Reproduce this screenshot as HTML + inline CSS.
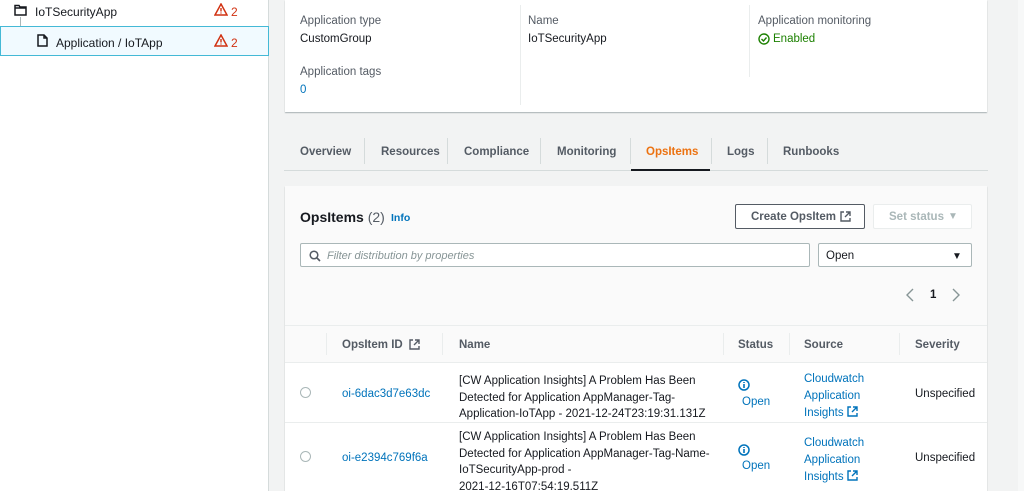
<!DOCTYPE html>
<html><head><meta charset="utf-8"><style>
*{box-sizing:border-box;margin:0;padding:0}
html{overflow:hidden}
body{width:1024px;height:491px;overflow:hidden;background:#f2f3f3;font-family:"Liberation Sans",sans-serif;font-size:11.5px;color:#16191f;position:relative}
.a{position:absolute;white-space:nowrap}
div.a{padding-top:1px}
.lbl{color:#545b64}
.link{color:#0073bb}
.b{font-weight:bold}
svg{display:inline-block;vertical-align:middle}
</style></head><body>
<!-- sidebar -->
<div class="a" style="left:0;top:0;width:269px;height:491px;background:#fff;border-right:1px solid #d5dbdb"></div>
<div class="a" style="left:20px;top:17px;width:1px;height:24px;background:#aab7b8;padding:0"></div>
<div class="a" style="left:20px;top:41px;width:16px;height:1px;background:#aab7b8;padding:0"></div>
<svg class="a" style="left:14px;top:4px" width="13" height="12" viewBox="0 0 13 12"><path d="M1 1.5h4l1 1.5h6v8H1z M1 4h11" fill="none" stroke="#16191f" stroke-width="1.5"/></svg>
<div class="a" style="left:35px;top:4px;font-size:12px">IoTSecurityApp</div>
<svg class="a" style="left:214px;top:3px" width="14" height="13" viewBox="0 0 14 13"><path d="M7 1L13 12H1z" fill="none" stroke="#d13212" stroke-width="1.5"/><path d="M7 5v3.5M7 9.5v1" stroke="#d13212" stroke-width="1.4"/></svg>
<div class="a" style="left:231px;top:4px;color:#d13212;font-size:12px">2</div>
<div class="a" style="left:0;top:26px;width:269px;height:30px;background:#f1faff;border:1px solid #44b9d6"></div>
<svg class="a" style="left:37px;top:34px" width="11" height="13" viewBox="0 0 11 13"><path d="M1 1h6l3 3v8H1z M7 1v3h3" fill="none" stroke="#16191f" stroke-width="1.5"/></svg>
<div class="a" style="left:56px;top:35px;font-size:12px">Application / IoTApp</div>
<svg class="a" style="left:214px;top:34px" width="14" height="13" viewBox="0 0 14 13"><path d="M7 1L13 12H1z" fill="none" stroke="#d13212" stroke-width="1.5"/><path d="M7 5v3.5M7 9.5v1" stroke="#d13212" stroke-width="1.4"/></svg>
<div class="a" style="left:231px;top:35px;color:#d13212;font-size:12px">2</div>

<!-- right strip -->
<div class="a" style="left:1018px;top:0;width:6px;height:491px;background:#f7f8f8"></div>

<!-- top card -->
<div class="a" style="left:285px;top:0;width:702px;height:112px;background:#fff;box-shadow:0 1px 1px rgba(0,28,36,.3)"></div>
<div class="a" style="left:520px;top:5px;width:1px;height:100px;background:#eaeded;padding:0"></div>
<div class="a" style="left:749px;top:5px;width:1px;height:72px;background:#eaeded;padding:0"></div>
<div class="a lbl" style="left:300px;top:14px">Application type</div>
<div class="a" style="left:300px;top:32px">CustomGroup</div>
<div class="a lbl" style="left:300px;top:65px">Application tags</div>
<div class="a link" style="left:300px;top:83px">0</div>
<div class="a lbl" style="left:528px;top:14px">Name</div>
<div class="a" style="left:528px;top:32px">IoTSecurityApp</div>
<div class="a lbl" style="left:758px;top:14px">Application monitoring</div>
<svg class="a" style="left:758px;top:33px" width="12" height="12" viewBox="0 0 12 12"><circle cx="6" cy="6" r="5" fill="none" stroke="#1d8102" stroke-width="1.4"/><path d="M3.5 6l2 2 3-3.5" fill="none" stroke="#1d8102" stroke-width="1.4"/></svg>
<div class="a" style="left:773px;top:32px;color:#1d8102">Enabled</div>

<!-- tabs -->
<div class="a" style="left:284px;top:170px;width:704px;height:1px;background:#d5dbdb;padding:0"></div>
<div class="a" style="left:364px;top:138px;width:1px;height:26px;background:#d5dbdb;padding:0"></div>
<div class="a" style="left:447px;top:138px;width:1px;height:26px;background:#d5dbdb;padding:0"></div>
<div class="a" style="left:540px;top:138px;width:1px;height:26px;background:#d5dbdb;padding:0"></div>
<div class="a" style="left:630px;top:138px;width:1px;height:26px;background:#d5dbdb;padding:0"></div>
<div class="a" style="left:711px;top:138px;width:1px;height:26px;background:#d5dbdb;padding:0"></div>
<div class="a" style="left:767px;top:138px;width:1px;height:26px;background:#d5dbdb;padding:0"></div>
<div class="a" style="left:631px;top:169px;width:79px;height:2px;background:#16191f;padding:0"></div>
<div class="a b" style="left:300px;top:145px;color:#545b64">Overview</div>
<div class="a b" style="left:381px;top:145px;color:#545b64">Resources</div>
<div class="a b" style="left:464px;top:145px;color:#545b64">Compliance</div>
<div class="a b" style="left:557px;top:145px;color:#545b64">Monitoring</div>
<div class="a b" style="left:646px;top:145px;color:#ec7211">OpsItems</div>
<div class="a b" style="left:727px;top:145px;color:#545b64">Logs</div>
<div class="a b" style="left:783px;top:145px;color:#545b64">Runbooks</div>

<!-- opsitems card -->
<div class="a" style="left:285px;top:186px;width:702px;height:305px;background:#fafafa;box-shadow:0 1px 1px rgba(0,28,36,.3)"></div>
<div class="a" style="left:285px;top:325px;width:702px;height:1px;background:#eaeded;padding:0"></div>
<div class="a" style="left:300px;top:208px;font-size:14px;font-weight:bold">OpsItems <span style="font-weight:normal;color:#545b64">(2)</span></div>
<div class="a link b" style="left:391px;top:211px;font-size:10.5px">Info</div>
<div class="a" style="left:735px;top:204px;width:130px;height:25px;border:1px solid #545b64;border-radius:2px;background:#fff"></div>
<div class="a b" style="left:751px;top:210px;color:#545b64">Create OpsItem</div>
<svg class="a" style="left:840px;top:211px" width="11" height="11" viewBox="0 0 11 11"><path d="M4 1H1v9h9V7 M6 1h4v4 M10 1L5 6" fill="none" stroke="#545b64" stroke-width="1.4"/></svg>
<div class="a" style="left:873px;top:204px;width:99px;height:25px;border:1px solid #eaeded;border-radius:2px;background:#fff"></div>
<div class="a b" style="left:889px;top:210px;color:#aab7b8">Set status</div>
<div class="a" style="left:948px;top:210px;color:#aab7b8;font-size:10px">&#9660;</div>
<div class="a" style="left:300px;top:243px;width:510px;height:24px;border:1px solid #aab7b8;border-radius:2px;background:#fff"></div>
<svg class="a" style="left:309px;top:250px" width="12" height="12" viewBox="0 0 12 12"><circle cx="5" cy="5" r="3.8" fill="none" stroke="#545b64" stroke-width="1.5"/><path d="M8 8l3 3" stroke="#545b64" stroke-width="1.6"/></svg>
<div class="a" style="left:327px;top:249px;color:#879596;font-style:italic;font-size:11px">Filter distribution by properties</div>
<div class="a" style="left:818px;top:243px;width:154px;height:24px;border:1px solid #aab7b8;border-radius:2px;background:#fff"></div>
<div class="a" style="left:826px;top:249px">Open</div>
<div class="a" style="left:952px;top:250px;color:#16191f;font-size:10px">&#9660;</div>
<svg class="a" style="left:905px;top:288px" width="10" height="14" viewBox="0 0 10 14"><path d="M8 1L2 7l6 6" fill="none" stroke="#879596" stroke-width="1.4"/></svg>
<div class="a b" style="left:930px;top:288px">1</div>
<svg class="a" style="left:951px;top:288px" width="10" height="14" viewBox="0 0 10 14"><path d="M2 1l6 6-6 6" fill="none" stroke="#879596" stroke-width="1.4"/></svg>

<!-- table header -->
<div class="a" style="left:326px;top:333px;width:1px;height:22px;background:#eaeded;padding:0"></div>
<div class="a" style="left:442px;top:333px;width:1px;height:22px;background:#eaeded;padding:0"></div>
<div class="a" style="left:723px;top:333px;width:1px;height:22px;background:#eaeded;padding:0"></div>
<div class="a" style="left:789px;top:333px;width:1px;height:22px;background:#eaeded;padding:0"></div>
<div class="a" style="left:899px;top:333px;width:1px;height:22px;background:#eaeded;padding:0"></div>
<div class="a b" style="left:342px;top:338px;color:#545b64">OpsItem ID</div>
<svg class="a" style="left:409px;top:339px" width="11" height="11" viewBox="0 0 11 11"><path d="M4 1H1v9h9V7 M6 1h4v4 M10 1L5 6" fill="none" stroke="#545b64" stroke-width="1.4"/></svg>
<div class="a b" style="left:459px;top:338px;color:#545b64">Name</div>
<div class="a b" style="left:738px;top:338px;color:#545b64">Status</div>
<div class="a b" style="left:804px;top:338px;color:#545b64">Source</div>
<div class="a b" style="left:915px;top:338px;color:#545b64">Severity</div>

<!-- rows -->
<div class="a" style="left:285px;top:362px;width:702px;height:129px;background:#fff"></div>
<div class="a" style="left:285px;top:362px;width:702px;height:1px;background:#eaeded;padding:0"></div>
<div class="a" style="left:285px;top:422px;width:702px;height:1px;background:#eaeded;padding:0"></div>

<div class="a" style="left:300px;top:387px;width:11px;height:11px;border:1px solid #aab7b8;border-radius:50%;background:#fff;padding:0"></div>
<div class="a link" style="left:342px;top:387px">oi-6dac3d7e63dc</div>
<div class="a" style="left:459px;top:372px;line-height:16.5px">[CW Application Insights] A Problem Has Been<br>Detected for Application AppManager-Tag-<br>Application-IoTApp - 2021-12-24T23:19:31.131Z</div>
<svg class="a" style="left:738px;top:379px" width="12" height="12" viewBox="0 0 12 12"><circle cx="6" cy="6" r="5" fill="none" stroke="#0073bb" stroke-width="1.5"/><path d="M6 5v4M6 3v1" stroke="#0073bb" stroke-width="1.6"/></svg>
<div class="a link" style="left:742px;top:395px">Open</div>
<div class="a link" style="left:804px;top:370px;line-height:17px">Cloudwatch<br>Application<br>Insights <svg width="11" height="11" viewBox="0 0 11 11" style="vertical-align:-1px"><path d="M4 1H1v9h9V7 M6 1h4v4 M10 1L5 6" fill="none" stroke="#0073bb" stroke-width="1.4"/></svg></div>
<div class="a" style="left:915px;top:387px">Unspecified</div>

<div class="a" style="left:300px;top:451px;width:11px;height:11px;border:1px solid #aab7b8;border-radius:50%;background:#fff;padding:0"></div>
<div class="a link" style="left:342px;top:451px">oi-e2394c769f6a</div>
<div class="a" style="left:459px;top:428px;line-height:16.5px">[CW Application Insights] A Problem Has Been<br>Detected for Application AppManager-Tag-Name-<br>IoTSecurityApp-prod -<br>2021-12-16T07:54:19.511Z</div>
<svg class="a" style="left:738px;top:444px" width="12" height="12" viewBox="0 0 12 12"><circle cx="6" cy="6" r="5" fill="none" stroke="#0073bb" stroke-width="1.5"/><path d="M6 5v4M6 3v1" stroke="#0073bb" stroke-width="1.6"/></svg>
<div class="a link" style="left:742px;top:459px">Open</div>
<div class="a link" style="left:804px;top:434px;line-height:17px">Cloudwatch<br>Application<br>Insights <svg width="11" height="11" viewBox="0 0 11 11" style="vertical-align:-1px"><path d="M4 1H1v9h9V7 M6 1h4v4 M10 1L5 6" fill="none" stroke="#0073bb" stroke-width="1.4"/></svg></div>
<div class="a" style="left:915px;top:451px">Unspecified</div>
</body></html>
